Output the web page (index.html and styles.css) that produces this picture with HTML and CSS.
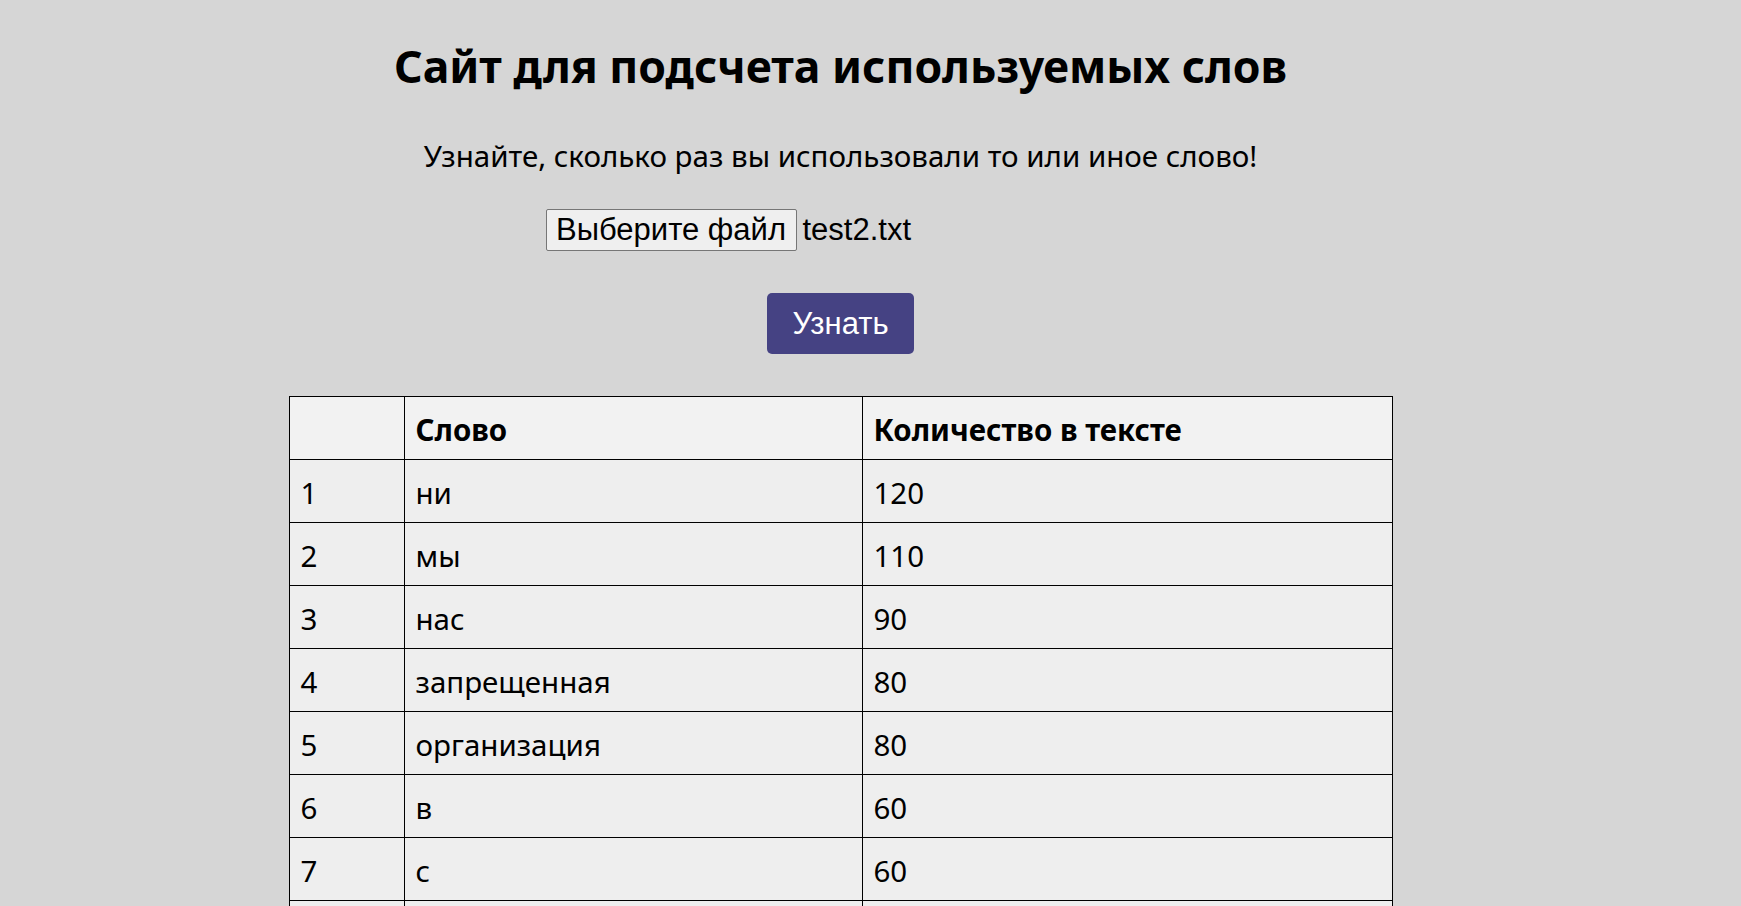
FILE: index.html
```html
<!DOCTYPE html>
<html lang="ru">
<head>
<meta charset="utf-8">
<title>Сайт для подсчета используемых слов</title>
<link rel="stylesheet" href="styles.css">
</head>
<body>
<main class="page">
  <h1 class="title">Сайт для подсчета используемых слов</h1>
  <p class="subtitle">Узнайте, сколько раз вы использовали то или иное слово!</p>
  <div class="file-input">
    <span class="file-btn">Выберите файл</span>
    <span class="file-name">test2.txt</span>
  </div>
  <button class="submit" type="button">Узнать</button>
  <table class="words">
    <colgroup>
      <col class="c-num">
      <col class="c-word">
      <col class="c-count">
    </colgroup>
    <thead>
      <tr><th></th><th>Слово</th><th>Количество в тексте</th></tr>
    </thead>
    <tbody>
      <tr><td>1</td><td>ни</td><td>120</td></tr>
      <tr><td>2</td><td>мы</td><td>110</td></tr>
      <tr><td>3</td><td>нас</td><td>90</td></tr>
      <tr><td>4</td><td>запрещенная</td><td>80</td></tr>
      <tr><td>5</td><td>организация</td><td>80</td></tr>
      <tr><td>6</td><td>в</td><td>60</td></tr>
      <tr><td>7</td><td>с</td><td>60</td></tr>
      <tr><td>8</td><td>и</td><td>50</td></tr>
    </tbody>
  </table>
</main>
</body>
</html>
```
FILE: styles.css
```css
html, body {
  margin: 0;
  padding: 0;
  background: #d6d6d6;
  overflow: hidden;
}
body {
  font-family: "Noto Sans", "Open Sans", sans-serif;
  color: #000;
}
.page {
  width: 1681px;
  display: flex;
  flex-direction: column;
  align-items: center;
  padding-top: 34px;
}
.title {
  margin: 0;
  font-size: 44.6px;
  line-height: 64px;
  font-weight: 700;
}
.subtitle {
  margin: 38px 0 0;
  font-size: 29.5px;
  line-height: 40px;
}
.file-input {
  margin-top: 33px;
  width: 590px;
  display: flex;
  align-items: center;
  gap: 6px;
  font-family: "Liberation Sans", Arial, sans-serif;
  font-size: 31px;
}
.file-btn {
  box-sizing: border-box;
  height: 42px;
  width: 251px;
  display: flex;
  align-items: center;
  justify-content: center;
  background: #efefef;
  border: 1px solid #767676;
  border-radius: 2px;
}
.submit {
  margin-top: 42px;
  width: 147px;
  height: 61px;
  border: none;
  border-radius: 5px;
  background: #454283;
  color: #fff;
  font-family: "Liberation Sans", Arial, sans-serif;
  font-size: 31px;
  padding: 0;
}
.words {
  margin-top: 42px;
  width: 1103px;
  table-layout: fixed;
  border-collapse: collapse;
  font-size: 29.5px;
  line-height: 40px;
}
.c-num { width: 115px; }
.c-word { width: 458px; }
.c-count { width: 530px; }
.words th,
.words td {
  border: 1px solid #000;
  text-align: left;
  vertical-align: top;
  padding: 13px 11px 0;
  height: 63px;
  box-sizing: border-box;
}
.words th {
  background: #f2f2f2;
  font-weight: 700;
}
.words td {
  background: #eeeeee;
}
```
